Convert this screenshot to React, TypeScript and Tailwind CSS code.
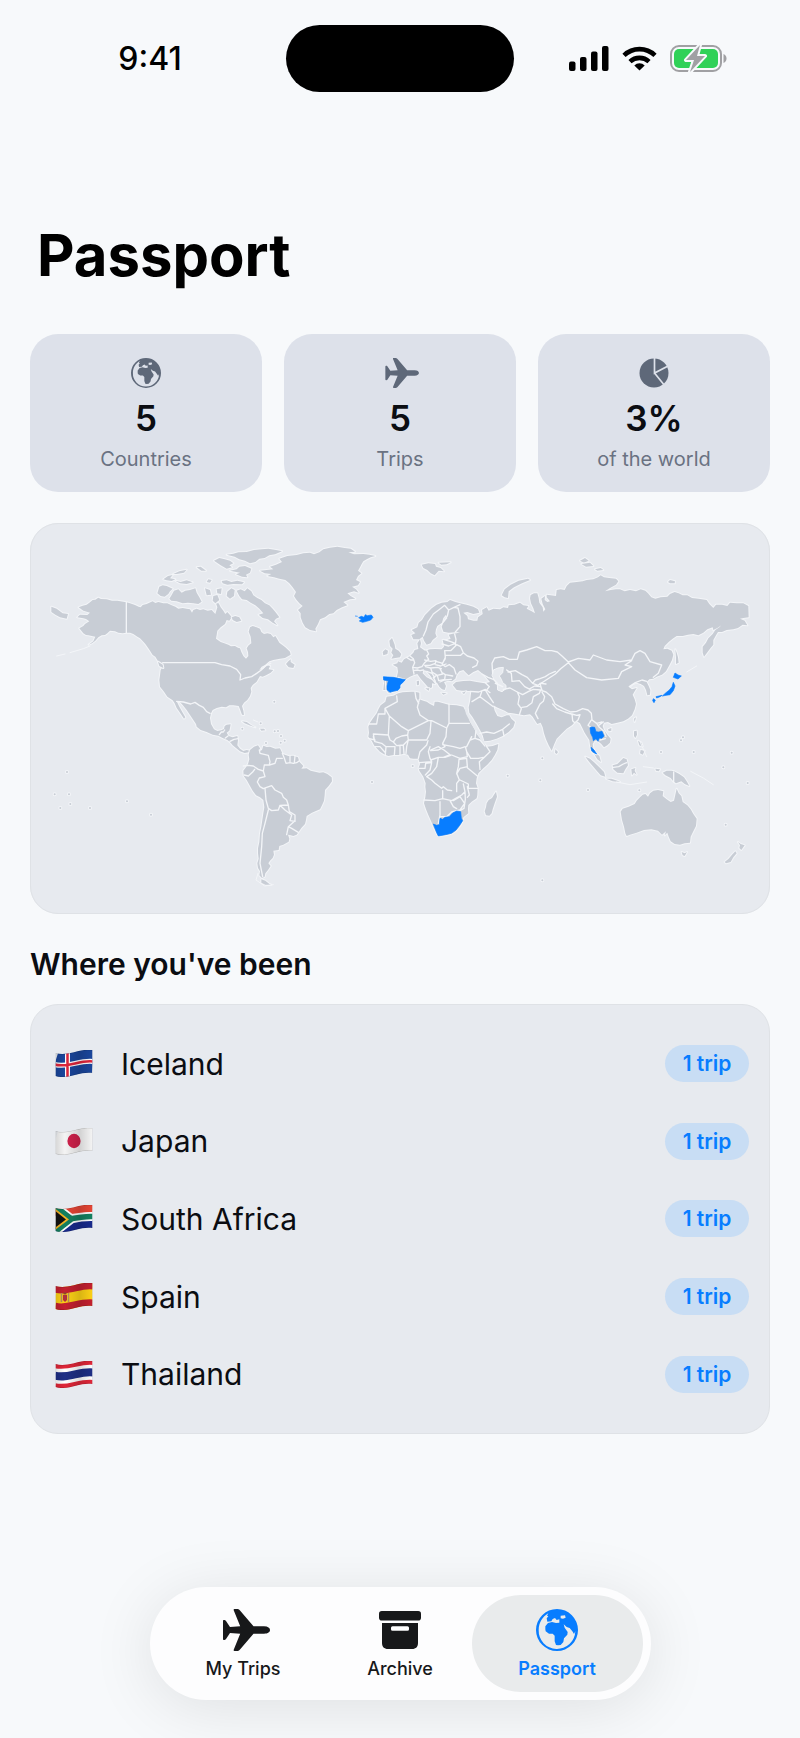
import React, { useState } from 'react';
import clsx from 'clsx';

type IconProps = { className?: string };

const GlobeIcon: React.FC<IconProps> = ({ className }) => (
  <svg viewBox="0 0 126 126" className={className} fill="currentColor" fillRule="evenodd" aria-hidden="true">
    <path d="M63 0a63 63 0 1 1 0 126A63 63 0 0 1 63 0ZM37 13C19 23 8 42 8 63a55 55 0 0 0 110 4l-4 8-5-8-8-10-9-3-9-8 3 10 9 13-1 8-10 11-2 11-8 9-8 1-6-1-4-11V80l-6-6H39l-10-7-1-6v-9l8-10 12-3 12 3 10-1V31l-8 2-5-6-7 3-4 7-12 1-2-10 5-6-4-2ZM74 20l13-1 2 7-8 3-7-1Z" />
  </svg>
);

const PlaneIcon: React.FC<IconProps> = ({ className }) => (
  <svg viewBox="-6 0 53 42" className={className} fill="currentColor" aria-hidden="true">
    <path d="M41 17.300c4 0 6 1.800 6 3.700s-2 3.700-6 3.700H30.500L17 40.500c-1 1.200-2 1.500-3 1.500h-2.500c-.8 0-1-.5-.8-1.300l6.500-16L7 24l-4 6c-.6.900-1.200 1-2 1-.6 0-1-.4-1-1V12c0-.6.4-1 1-1 .8 0 1.400.1 2 1l4 6 10.200-.7-6.500-16C10.500.5 10.700 0 11.500 0H14c1 0 2 .3 3 1.500l13.500 15.800Z" />
  </svg>
);

const PieIcon: React.FC<IconProps> = ({ className }) => (
  <svg viewBox="0 0 30 30" className={className} aria-hidden="true">
    <circle cx="15" cy="15" r="14.500" fill="currentColor" />
    <path d="M15.500 0v15L30 7.500M15.500 15 26 28" fill="none" stroke="#dde1ea" strokeWidth="1.700" />
  </svg>
);

const ArchiveIcon: React.FC<IconProps> = ({ className }) => (
  <svg viewBox="0 0 42 38" className={className} fill="currentColor" fillRule="evenodd" aria-hidden="true">
    <rect width="42" height="9.500" rx="2.800" />
    <path d="M3 12h36v20c0 3.700-2 6-6 6H9c-4 0-6-2.300-6-6ZM13.500 15.300a1.500 1.500 0 0 0-1.500 1.500v1.400a1.500 1.500 0 0 0 1.500 1.500h15a1.500 1.500 0 0 0 1.500-1.500v-1.400a1.500 1.500 0 0 0-1.500-1.500Z" />
  </svg>
);

const StatusIcons: React.FC = () => (
  <div className="flex items-center gap-[13px]">
    <svg viewBox="0 0 40 25" className="h-[25px] w-10" aria-label="Signal">
      <rect y="15.500" width="6.500" height="9.500" rx="2" />
      <rect x="11" y="11" width="6.500" height="14" rx="2" />
      <rect x="22" y="5.500" width="6.500" height="19.500" rx="2" />
      <rect x="33" width="6.500" height="25" rx="2" />
    </svg>
    <svg viewBox="0 0 35 25" className="h-[25px] w-[35px]" fill="none" stroke="#000" strokeWidth="4.600" aria-label="Wi-Fi">
      <path d="M2 9.300a22.500 22.500 0 0 1 31 0M8 15.600a14 14 0 0 1 19 0" />
      <path d="M17.500 24.500 12.300 19.400a7.600 7.600 0 0 1 10.400 0Z" fill="#000" stroke="none" />
    </svg>
    <svg viewBox="0 0 57 27" className="h-[27px] w-[57px]" aria-label="Battery charging">
      <rect x="1" y="1" width="50" height="25" rx="8" fill="none" stroke="#a0a0a3" strokeWidth="2" />
      <path d="M53.500 9c1.800.6 3 2.400 3 4.500s-1.200 3.900-3 4.500Z" fill="#a0a0a3" />
      <rect x="4" y="4" width="44" height="19" rx="5" fill="#30d158" />
      <path d="M30 0 16 15h8l-4 12 15-16h-8l3-11Z" fill="#a0a0a3" stroke="#f7f9fb" strokeWidth="4" strokeLinejoin="round" paintOrder="stroke" />
    </svg>
  </div>
);

// Land masses, all in one 2220x1173 map space
const LAND = [
  // North America
  'M146 262 158 257 170 254 180 247 188 240 196 239 205 233 213 237 230 238 246 242 262 242 289 247 300 250 315 255 326 260 332 262 338 255 350 252 358 248 368 244 376 249 385 246 400 250 412 250 425 256 436 260 445 266 458 264 470 266 480 268 486 278 490 270 500 266 510 270 520 268 533 272 545 270 556 282 562 262 558 250 566 250 572 262 580 272 586 282 592 276 600 285 605 292 598 302 590 300 585 312 572 322 562 332 560 345 558 356 572 366 583 370 595 374 603 379 615 378 624 383 630 385 634 396 640 408 648 416 655 408 654 396 650 385 656 376 664 370 662 350 656 335 660 322 668 318 680 322 690 326 694 336 702 342 712 340 722 342 730 352 736 348 742 358 748 368 756 374 766 382 780 395 782 404 765 414 750 416 730 420 718 424 705 435 695 440 688 450 700 446 712 436 720 438 716 448 730 450 722 458 708 466 698 470 690 468 680 485 668 495 662 504 664 515 660 528 652 540 642 548 636 558 640 572 642 585 636 584 630 568 626 558 610 556 598 556 588 562 575 560 560 564 548 570 543 580 540 594 543 612 552 628 562 633 574 631 582 627 584 618 590 614 602 613 600 624 598 632 590 638 596 648 608 652 622 648 624 660 622 676 630 686 640 693 650 690 660 692 656 697 644 699 630 694 618 684 608 676 602 668 592 660 578 654 565 647 548 644 530 636 512 630 500 620 498 612 490 600 480 585 470 570 458 555 449 545 440 544 448 560 458 578 466 592 462 596 450 578 440 564 434 550 428 541 412 530 402 515 390 500 388 480 390 466 392 450 398 440 385 425 376 410 368 405 360 392 355 385 346 372 340 365 330 355 322 350 310 342 300 338 289 338 278 340 265 338 255 334 240 332 232 340 225 345 215 346 205 352 196 362 186 370 176 374 190 364 196 350 175 346 168 345 160 340 148 325 160 318 165 312 178 304 168 297 160 295 142 292 150 284 172 285 180 278 160 272Z',
  'M64 260 80 266 98 280 114 282 110 296 90 292 76 284 64 276Z',
  // Newfoundland, Vancouver
  'M768 432 775 424 782 418 782 426 794 434 790 444 776 442Z',
  'M384 425 398 434 400 444 388 438Z',
  // Arctic islands
  'M388 200 398 196 410 198 428 206 420 214 415 222 404 230 392 228 382 220Z',
  'M425 225 432 212 445 208 455 218 466 212 480 210 496 205 500 218 508 232 515 245 505 252 490 250 474 248 458 250 440 244 424 242 418 236Z',
  'M525 205 540 210 543 224 530 226Z',
  'M550 228 562 225 568 240 556 250 548 242Z',
  'M560 208 575 205 573 222 562 220Z',
  'M592 215 604 205 614 210 612 228 600 236 590 228Z',
  'M400 178 414 168 428 165 420 175 436 178 425 183 410 181Z',
  'M436 182 452 186 470 181 488 187 470 192 450 190Z',
  'M430 162 448 154 470 149 462 158 440 162Z',
  'M500 142 512 140 528 152 514 152Z',
  'M535 178 545 180 540 188 530 186Z',
  'M575 183 590 181 604 186 622 182 642 187 636 193 610 192 592 194 578 190Z',
  'M552 122 568 114 584 118 600 122 610 130 598 136 606 142 590 146 572 136Z',
  'M590 104 610 101 625 97 650 96 672 90 695 88 715 86 738 90 756 94 735 103 718 106 704 114 688 116 676 126 660 130 645 122 628 118 614 110Z',
  'M600 152 620 148 628 140 645 138 664 146 660 158 648 164 652 172 636 170 618 163 630 158Z',
  'M620 212 632 208 644 214 652 205 664 214 670 226 682 234 694 240 705 250 718 256 728 266 738 278 748 292 738 296 732 304 742 316 728 308 714 298 698 294 686 284 700 280 688 266 676 256 662 248 650 240 636 238 628 228Z',
  'M605 292 616 288 628 292 634 302 620 306 608 300Z',
  // Greenland
  'M690 152 710 150 730 148 720 140 738 134 756 126 748 116 772 108 800 105 820 100 840 98 852 103 868 97 880 88 900 83 922 80 944 84 962 86 975 95 955 97 972 103 1000 102 1018 104 1036 108 1022 112 1010 118 1000 124 995 132 990 142 984 152 994 160 984 168 978 180 990 186 984 196 966 200 978 208 986 218 972 214 952 220 962 228 976 236 960 238 940 246 952 256 936 262 920 270 910 280 898 282 885 292 870 298 864 312 856 326 858 334 840 330 826 322 818 308 812 292 812 280 804 270 818 258 808 250 798 238 792 228 798 216 788 202 778 190 766 180 748 176 732 172 712 168 724 162 704 160Z',
  // Svalbard, Franz Josef, Novaya Zemlya
  'M1175 134 1195 130 1215 132 1218 140 1232 144 1242 154 1226 152 1214 166 1202 160 1192 150 1180 144Z',
  'M1226 128 1262 127 1250 133 1234 134Z',
  'M1415 226 1424 208 1442 194 1466 182 1494 176 1500 180 1476 190 1452 202 1436 214 1434 234 1424 232Z',
  'M1650 122 1665 114 1676 122 1662 128Z',
  'M1654 132 1680 128 1690 138 1668 140Z',
  'M1695 148 1712 144 1720 150 1702 152Z',
  'M1914 186 1920 180 1935 184 1934 190 1920 190Z',
  // Cuba, Hispaniola
  'M636 604 650 606 664 616 676 622 658 616 644 610Z',
  'M690 626 702 626 706 631 694 632Z',
  // South America
  'M660 690 672 680 684 676 690 685 688 694 696 690 700 677 710 681 720 680 736 686 750 685 758 702 775 708 790 707 804 712 808 725 820 738 814 746 830 745 842 752 855 755 868 758 880 757 892 762 905 772 906 784 896 798 885 810 884 826 882 842 876 856 870 868 856 874 846 878 830 888 828 900 825 912 814 924 806 936 800 944 790 948 782 946 774 944 778 956 776 965 760 974 748 978 746 990 730 992 732 1004 728 1014 720 1022 715 1030 722 1038 714 1050 706 1060 704 1070 696 1074 688 1066 690 1054 684 1044 682 1030 686 1016 684 1000 684 985 688 966 690 940 694 920 697 900 700 880 703 862 700 840 690 832 678 826 668 812 660 798 650 780 641 768 640 752 648 742 654 732 658 718 656 704Z',
  'M694 1078 706 1082 718 1092 724 1094 706 1094 694 1088Z',
  // Africa
  'M1070 530 1090 527 1105 520 1118 517 1130 516 1145 515 1155 515 1168 518 1168 530 1168 538 1180 542 1190 545 1200 552 1212 558 1214 545 1224 545 1240 550 1256 554 1280 556 1300 560 1310 580 1316 592 1320 605 1328 618 1335 630 1340 642 1350 655 1362 670 1370 680 1388 678 1405 672 1402 690 1394 706 1385 720 1372 734 1360 745 1345 760 1340 775 1338 790 1343 804 1342 825 1340 835 1325 845 1315 855 1314 868 1315 880 1300 892 1297 905 1290 918 1278 932 1268 940 1250 945 1225 948 1220 940 1210 920 1204 905 1195 885 1188 868 1182 850 1186 832 1188 815 1186 800 1187 790 1180 770 1168 752 1166 744 1170 732 1165 716 1150 716 1140 715 1134 704 1122 701 1105 705 1090 705 1075 708 1062 703 1050 695 1040 685 1033 677 1025 662 1015 650 1017 638 1015 620 1020 608 1028 596 1040 580 1046 566 1052 556 1066 545Z',
  'M1398 815 1401 830 1394 850 1388 868 1385 880 1378 887 1368 886 1364 874 1368 862 1370 850 1376 840 1386 834 1392 824Z',
  // Eurasia
  'M1060 510 1062 490 1060 470 1100 473 1104 455 1102 442 1088 434 1102 430 1104 424 1115 428 1122 418 1140 408 1150 398 1154 390 1165 387 1162 370 1170 358 1173 370 1170 382 1185 392 1200 388 1215 387 1235 388 1242 380 1240 368 1238 360 1252 360 1262 356 1256 344 1268 341 1280 340 1290 336 1275 337 1256 338 1240 335 1235 320 1240 308 1252 295 1248 284 1240 294 1236 308 1222 318 1218 328 1216 340 1220 350 1208 360 1202 370 1190 374 1182 362 1178 350 1168 358 1150 358 1144 345 1156 340 1145 330 1162 322 1166 308 1176 300 1185 285 1194 276 1205 265 1220 254 1235 248 1252 246 1260 240 1276 246 1290 250 1310 254 1330 260 1344 268 1348 278 1330 282 1312 276 1300 278 1312 288 1314 298 1330 302 1342 302 1344 292 1358 282 1356 270 1370 262 1376 272 1390 266 1410 268 1420 262 1434 264 1436 256 1454 254 1470 248 1480 256 1495 258 1490 266 1505 274 1515 280 1510 265 1503 250 1500 235 1502 225 1512 220 1522 220 1526 234 1528 248 1538 262 1540 275 1546 268 1538 252 1534 236 1545 228 1544 240 1552 246 1560 244 1550 232 1550 224 1562 226 1578 228 1580 210 1592 208 1604 210 1610 198 1620 188 1640 186 1658 184 1670 180 1690 178 1704 172 1712 166 1722 172 1738 174 1758 176 1765 184 1758 194 1740 204 1725 214 1742 210 1758 208 1770 208 1784 214 1800 210 1818 214 1832 208 1846 212 1854 220 1864 232 1876 236 1892 232 1912 230 1920 222 1934 216 1946 220 1958 226 1972 226 1986 234 2006 236 2030 240 2038 252 2050 264 2058 254 2076 254 2092 258 2100 248 2120 250 2140 250 2155 258 2156 292 2140 294 2130 296 2144 302 2152 316 2138 314 2124 324 2110 328 2090 330 2076 336 2064 336 2058 346 2050 360 2050 374 2040 386 2030 400 2022 410 2018 398 2018 380 2028 368 2035 355 2048 342 2056 330 2068 322 2074 316 2062 324 2050 330 2048 322 2032 328 2020 338 2005 346 1990 342 1974 344 1958 348 1940 348 1928 356 1916 366 1904 378 1900 388 1912 386 1925 392 1930 404 1926 420 1918 436 1908 454 1896 464 1880 470 1870 476 1858 478 1850 486 1856 498 1861 510 1860 524 1852 526 1848 510 1842 498 1832 492 1820 488 1808 492 1798 502 1806 508 1820 504 1814 514 1808 524 1814 538 1818 552 1814 568 1806 586 1794 596 1780 604 1762 608 1745 612 1734 606 1722 608 1718 618 1722 630 1732 644 1742 656 1740 668 1732 676 1722 682 1714 672 1702 662 1694 662 1688 672 1690 685 1698 700 1708 708 1713 726 1702 718 1694 704 1684 694 1680 676 1678 660 1670 648 1664 638 1656 622 1650 610 1638 602 1626 616 1610 626 1594 642 1580 656 1572 674 1565 692 1556 676 1548 658 1542 640 1538 622 1532 608 1522 612 1514 600 1508 590 1500 583 1482 586 1465 583 1448 580 1434 578 1424 572 1410 566 1400 562 1390 556 1394 572 1402 588 1415 592 1430 586 1438 586 1444 596 1455 606 1450 622 1436 636 1418 648 1400 656 1380 662 1363 664 1358 646 1350 630 1340 612 1328 592 1318 578 1316 562 1320 545 1322 528 1324 514 1308 512 1296 512 1280 510 1268 495 1278 486 1300 483 1320 482 1340 486 1364 490 1380 486 1368 472 1354 458 1344 450 1330 456 1316 466 1308 458 1300 450 1288 454 1280 464 1276 476 1266 484 1254 482 1242 486 1248 498 1244 510 1236 508 1228 500 1222 490 1210 480 1200 466 1188 452 1180 450 1178 460 1190 472 1206 480 1216 492 1206 490 1206 502 1198 506 1186 492 1172 476 1162 462 1150 466 1140 470 1130 476 1120 484 1112 494 1106 508 1095 515 1085 516 1075 518 1070 510Z',
  // British Isles
  'M1078 362 1086 354 1090 364 1094 374 1096 386 1106 392 1114 402 1110 412 1096 414 1084 416 1090 406 1084 398 1088 386 1080 378Z',
  'M1058 396 1066 388 1074 392 1072 402 1060 406Z',
  // Mediterranean islands
  'M1160 484 1167 482 1167 494 1161 496Z',
  'M1186 505 1198 505 1196 512Z',
  'M1234 518 1250 520 1240 524Z',
  'M1296 518 1308 514 1302 522Z',
  // Sakhalin, Taiwan, Hainan, Sri Lanka
  'M1936 388 1940 398 1944 412 1946 428 1938 432 1938 412Z',
  'M1812 596 1818 592 1814 606Z',
  'M1734 628 1744 624 1744 632 1736 634Z',
  'M1576 688 1584 696 1580 702 1575 698Z',
  // Philippines
  'M1812 634 1820 632 1821 644 1816 654 1812 648Z',
  'M1832 690 1844 692 1838 704 1830 700Z',
  'M1824 662 1834 668 1838 680 1828 676Z',
  // Indonesia, Papua
  'M1666 710 1680 716 1694 728 1708 742 1722 756 1726 770 1712 766 1700 752 1688 738 1676 724Z',
  'M1728 776 1744 776 1762 782 1770 786 1748 784Z',
  'M1748 736 1762 732 1772 722 1780 714 1790 718 1794 736 1786 748 1780 760 1762 758 1750 748Z',
  'M1804 748 1816 744 1814 752 1820 764 1812 758 1806 766Z',
  'M1876 746 1890 748 1886 754 1878 752Z',
  'M1898 758 1910 752 1924 752 1932 754 1948 762 1962 772 1970 784 1978 798 1964 792 1954 784 1938 790 1930 784 1922 774 1906 766Z',
  // Australia, Tasmania, New Zealand
  'M1772 875 1778 866 1796 860 1814 852 1820 842 1830 832 1838 824 1846 822 1854 830 1860 820 1870 812 1884 810 1900 814 1898 828 1910 838 1922 846 1932 842 1936 824 1940 806 1946 820 1954 828 1958 846 1972 856 1982 868 1990 882 2000 896 1998 918 1990 934 1982 950 1980 968 1964 970 1950 974 1934 972 1922 964 1916 950 1912 938 1904 946 1908 934 1896 944 1884 932 1864 928 1842 930 1820 938 1800 944 1790 948 1786 940 1782 920 1776 900Z',
  'M1955 996 1964 1000 1971 996 1964 1008 1958 1006Z',
  'M2124 966 2132 972 2144 976 2134 990 2128 984 2130 976Z',
  'M2116 994 2120 1000 2110 1012 2102 1026 2088 1030 2084 1026 2096 1016 2106 1004Z',
];

const BORDERS = [
  // Americas
  'M289 247V338M398 428H555L575 434 600 438 620 448 632 464 630 480 645 474 665 470 680 460 694 450 706 438 722 430',
  'M440 544 460 546 482 552 495 547 508 556 520 562 530 575 540 580M568 644 574 636 580 636 584 630M586 654 594 648M600 664 612 658 624 656M640 738 655 736 670 738 685 748 700 753M642 765 655 768 668 756 674 748M703 735 700 753 705 770 688 774 682 786 690 800 700 806 710 802M688 690 690 700 715 706 720 725 718 735 703 735M718 735 735 730 740 715 757 715M757 700 763 715 768 730 780 728M780 708V728L790 730 800 728 808 722M795 708 793 728M710 802 725 797 735 810 755 820 760 832 770 840 775 855M705 805 708 840 715 865 725 872 745 870 750 856 775 855M750 856 765 870 785 885 780 902 795 904 795 885 778 875 775 855M795 902 775 920 785 925 805 937M715 870 705 910 697 940 695 980 692 1010 690 1030 698 1070M775 920 770 944',
  // Africa
  'M1100 528 1102 545 1065 565 1065 582 1045 582 1040 612 1016 612M1065 565 1078 588 1075 645 1030 642 1034 664M1078 588 1115 620 1135 632 1195 602 1170 585 1162 562 1168 538M1155 516 1158 535 1166 550M1195 602 1205 602 1250 624 1257 610H1318M1257 552V610M1250 624 1248 650 1238 670 1245 680 1225 690 1202 692M1203 604 1200 640 1190 660 1155 660 1135 660 1133 645 1135 632M1075 645 1080 660 1090 666 1098 655 1115 648 1133 645M1090 666 1100 677 1120 675 1135 660 1130 680 1128 700M1095 680 1093 706M1110 679V704M1120 677 1122 700M1068 680 1066 703M1068 680 1095 680M1030 650 1035 665 1055 670 1068 680M1036 680 1050 680 1064 696M1015 655 1035 660M1165 715 1170 695 1190 675 1194 662M1200 680 1195 695 1200 715 1205 725 1168 728M1202 690 1225 680 1242 690 1262 706 1245 712 1225 712 1202 720M1238 674 1270 680 1290 685 1306 680 1310 695 1312 710 1290 715 1265 705M1310 695 1322 715 1345 715 1360 712M1335 655 1350 660 1365 678M1320 660 1335 655 1338 632M1325 650 1310 680M1370 680 1380 695 1360 715 1348 725 1350 748M1225 712 1220 740 1205 760 1190 770 1205 780 1215 790 1235 805 1240 800 1252 810 1265 812M1287 718 1285 740 1280 760 1288 780 1280 790 1280 815M1290 718 1310 715 1312 740 1290 745 1280 762M1312 743 1342 768M1290 780 1315 792 1315 805 1343 805M1182 840 1215 842 1238 836 1238 812M1238 836 1265 842 1295 825 1305 815 1300 792M1230 845V885L1225 910M1260 842 1270 860 1280 866M1230 890 1250 890 1265 876 1290 870 1304 850 1290 830 1270 842M1305 815 1306 838 1302 865 1290 872M1312 800 1318 825 1312 832M1168 745 1185 745 1187 730 1205 728M1186 765 1200 750 1205 728M1257 705 1240 712',
  // Europe
  'M1104 472 1124 478M1140 408 1150 416 1154 428 1148 442 1152 462M1130 412 1142 420 1150 420M1148 442 1162 444 1176 440 1184 428 1196 418 1190 408 1196 402 1190 390M1150 452 1162 450 1170 452 1180 450M1184 420 1202 424 1218 422 1216 430 1200 436 1184 436M1218 424 1238 430 1246 412 1244 392M1216 434 1232 438 1248 432M1246 416 1236 432 1246 440 1258 434 1272 444 1278 462M1186 440 1202 444 1222 442 1234 446M1202 444 1206 456 1222 466 1238 462 1230 446M1222 466 1226 482 1244 478 1246 464 1236 458M1246 464 1268 468M1230 486 1244 480 1264 478M1190 454 1206 460 1214 472M1220 466 1210 472 1216 484M1244 392 1262 392 1280 374 1292 380 1300 398 1292 406 1270 406 1248 406M1236 372 1256 378 1276 370M1240 358 1260 364 1276 370M1274 342 1278 358 1276 374M1300 398 1312 408 1332 414 1344 424 1340 436 1328 442M1240 306 1252 288 1256 270 1272 262 1284 264 1290 290 1290 320 1276 336M1256 270 1244 256 1226 270 1210 282 1194 306 1188 330 1180 348M1272 262 1290 254M1066 484 1068 508',
  // Middle East, Central Asia
  'M1356 462 1374 472 1390 478 1402 490M1366 488 1378 500 1370 510 1380 518M1320 514 1346 516 1366 508M1380 518 1370 510 1356 512 1350 530 1326 545M1350 530 1370 545 1390 560M1366 510 1378 530 1390 548M1350 640 1370 636 1392 640 1418 628 1438 612M1418 628 1422 648M1420 508 1440 504 1462 516 1468 530 1464 552 1474 566 1468 584M1418 500 1410 496 1396 490M1462 516 1478 524 1496 514 1510 508 1532 510 1528 520 1510 530 1506 548 1490 560 1476 562M1536 516 1544 530 1540 544 1530 552 1522 568 1516 580 1524 596M1430 450 1444 460 1446 484 1468 482 1484 500 1500 508M1434 456 1456 452 1476 464 1492 472 1508 490 1516 480 1530 476 1546 470 1558 462 1576 454M1508 490 1524 496 1532 490 1548 492M1500 506 1514 498 1532 500 1536 510M1388 460 1386 430 1394 414 1420 410 1438 418 1462 418 1468 396 1490 390 1520 380 1545 392 1565 392 1582 396 1596 408 1615 426M1615 428 1592 446 1576 462 1530 492M1615 426 1645 415 1680 420 1690 405 1730 420 1770 425 1805 420 1815 400 1830 392 1845 400 1860 425 1895 435 1885 460 1870 472M1615 428 1635 450 1670 473 1715 480 1765 475 1775 455 1805 440 1785 435 1805 422M1798 500 1816 488 1836 480 1850 484M1530 490 1536 512 1548 516 1565 530 1575 552 1600 566 1622 576 1640 574 1658 566 1674 570 1684 580 1686 600 1700 610 1716 606M1568 552 1580 566 1604 576 1624 582M1626 582 1640 586 1650 584 1644 600 1640 604M1626 582 1628 602 1634 608M1684 600 1674 616 1682 622M1700 610 1708 622 1722 634 1728 650M1720 606 1706 616M1710 660 1726 656',
  'M1931 756V786M1750 742 1766 740 1780 732 1790 728M1690 700 1700 704',
];

const VISITED = [
  'M975 288 983 289M986 293 994 289 1002 292 1006 284 1012 287 1024 285 1029 292 1022 300 1010 304 998 307 988 303 994 298Z',
  'M1060 470 1074 471 1090 472 1104 475 1126 479 1118 488 1110 495 1110 503 1104 511 1092 513 1080 517 1071 509 1071 498 1075 482 1061 480Z',
  'M1210 912 1220 916 1228 914 1230 895 1238 898 1245 892 1258 890 1268 879 1280 873 1292 875 1294 895 1298 902 1290 914 1278 930 1264 940 1246 944 1225 948 1220 938Z',
  'M1935 459 1944 465 1954 468 1944 477 1930 472Z',
  'M1930 487 1935 498 1930 512 1920 524 1908 526 1897 528 1908 518 1918 510 1926 500Z',
  'M1870 536 1876 540 1872 548 1868 542ZM1878 530 1896 526 1890 530 1880 534Z',
  'M1680 623 1686 621 1694 622 1698 635 1706 636 1716 634 1722 648 1716 655 1708 654 1704 664 1698 656 1690 662 1688 652 1682 640ZM1683 682 1692 690 1700 702 1692 698 1685 692Z',
];

const ISLETS = [
  [111, 756], [74, 823], [117, 823], [121, 852], [91, 864], [180, 864], [291, 844], [363, 884],
  [733, 545], [637, 626], [692, 610], [734, 634], [744, 633], [753, 648], [764, 662], [752, 668], [708, 669],
  [1026, 786], [1148, 738], [1433, 767], [1531, 781], [1537, 715], [1674, 810], [1828, 811], [1537, 1081],
  [1893, 696], [1953, 661], [1959, 652], [1991, 696], [2105, 698], [2080, 742], [2153, 789], [2087, 914],
];

const WorldMap: React.FC = () => (
  <svg viewBox="0 9 2220 1173" className="block w-full" role="img" aria-label="World map of visited countries">
    <g fill="#c8cdd5" stroke="#f3f5f8" strokeWidth="6" strokeLinejoin="round" paintOrder="stroke">
      {LAND.map((d) => (
        <path key={d} d={d} />
      ))}
      {ISLETS.map(([x, y]) => (
        <circle key={`${x}-${y}`} cx={x} cy={y} r="3" />
      ))}
    </g>
    {/* Inland water */}
    <path d="M1390 450 1404 444 1420 442 1418 458 1408 468 1414 478 1418 488 1428 496 1428 506 1416 515 1403 510 1402 494 1392 478 1386 466Z" fill="#e7eaef" stroke="#f3f5f8" strokeWidth="3" />
    <path d="M1303 560 1314 578 1330 606 1344 632 1360 660 1366 672 1354 662 1338 636 1322 608 1308 582Z" fill="#e7eaef" />
    <g fill="none" stroke="#f3f5f8" strokeWidth="4" strokeLinejoin="round" strokeLinecap="round">
      {BORDERS.map((d) => (
        <path key={d} d={d} />
      ))}
      {/* Island chains */}
      <path d="M80 408 105 402M120 398 160 386 180 378M1760 786 1800 794 1850 786M1982 754 2020 774 2050 794M684 1060 678 1080 704 1098 730 1094M670 600 684 606M1830 665 1850 710M1840 740 1870 744M1970 456 2000 438" strokeWidth="3" />
    </g>
    <g fill="#087dff" stroke="#087dff" strokeWidth="2" strokeLinejoin="round">
      {VISITED.map((d) => (
        <path key={d} d={d} />
      ))}
    </g>
  </svg>
);

type Stripe = { y: number; w: number; color: string };

const FLAG_SHAPE = 'M0 3C12 7 24-2 37 0V23C24 21 12 30 0 26Z';

// Every stripe follows the same wave as the flag's edge
const wave = (y: number) => `M-1 ${y + 3}C12 ${y + 7} 24 ${y - 2} 38 ${y}`;

const Flag: React.FC<{ code: string; stripes: Stripe[]; children?: React.ReactNode }> = ({ code, stripes, children }) => (
  <svg viewBox="0 0 37 27" className="h-[27px] w-[38px] shrink-0" aria-hidden="true">
    <defs>
      <clipPath id={`flag-${code}`}>
        <path d={FLAG_SHAPE} />
      </clipPath>
      <linearGradient id={`shade-${code}`}>
        <stop offset="0" stopColor="#000" stopOpacity=".12" />
        <stop offset=".25" stopColor="#000" stopOpacity="0" />
        <stop offset=".65" stopColor="#000" stopOpacity=".14" />
        <stop offset="1" stopColor="#000" stopOpacity="0" />
      </linearGradient>
    </defs>
    <g clipPath={`url(#flag-${code})`}>
      {stripes.map((s, i) => (
        <path key={i} d={wave(s.y)} stroke={s.color} strokeWidth={s.w} fill="none" />
      ))}
      {children}
      <path d={FLAG_SHAPE} fill={`url(#shade-${code})`} stroke="#0003" />
    </g>
  </svg>
);

const FLAGS: Record<string, React.ReactNode> = {
  is: (
    <Flag code="is" stripes={[{ y: 11.5, w: 32, color: '#1a469c' }]}>
      <path d="M12 0V27" stroke="#fff" strokeWidth="5" />
      <path d={wave(11.5)} stroke="#fff" strokeWidth="5" fill="none" />
      <path d={`M12 0V27${wave(11.5)}`} stroke="#e0263c" strokeWidth="2.500" fill="none" />
    </Flag>
  ),
  jp: (
    <Flag code="jp" stripes={[{ y: 11.5, w: 32, color: '#f4f4f4' }]}>
      <ellipse cx="18.500" cy="13" rx="6.600" ry="7.200" fill="#d0214b" />
    </Flag>
  ),
  za: (
    <Flag
      code="za"
      stripes={[
        { y: 11.5, w: 34, color: '#fff' },
        { y: 1, w: 13, color: '#e64535' },
        { y: 22, w: 13, color: '#182a8c' },
      ]}
    >
      <path d="M-2 0 16 14-2 28M14 14C24 12 30 11 38 11.500" stroke="#fff" strokeWidth="9" fill="none" />
      <path d="M-2 0 16 14-2 28M14 14C24 12 30 11 38 11.500" stroke="#148060" strokeWidth="5.500" fill="none" />
      <path d="M-2 3.500 12 14.500-2 25Z" fill="#111" stroke="#f4b223" strokeWidth="1.800" />
    </Flag>
  ),
  es: (
    <Flag
      code="es"
      stripes={[
        { y: 11.5, w: 32, color: '#fcd116' },
        { y: 1, w: 11, color: '#c4202f' },
        { y: 22, w: 11, color: '#c4202f' },
      ]}
    >
      <path d="M6 10V19M13 10V19" stroke="#b98a62" strokeWidth="1.500" />
      <path d="M7.500 12H11.500V17L9.500 19 7.500 17Z" fill="#b3303a" />
      <path d="M8 10.500H11" stroke="#8a4a28" strokeWidth="2" />
    </Flag>
  ),
  th: (
    <Flag
      code="th"
      stripes={[
        { y: 11.5, w: 32, color: '#fff' },
        { y: 0.5, w: 7, color: '#e02638' },
        { y: 22.5, w: 7, color: '#e02638' },
        { y: 11.5, w: 8, color: '#1f2f86' },
      ]}
    />
  ),
};

const STATS = [
  { icon: <GlobeIcon className="h-[30px] w-[30px]" />, value: '5', label: 'Countries' },
  { icon: <PlaneIcon className="h-[30px] w-[38px]" />, value: '5', label: 'Trips' },
  { icon: <PieIcon className="h-[30px] w-[30px]" />, value: '3%', label: 'of the world' },
];

const COUNTRIES = [
  { code: 'is', name: 'Iceland', trips: '1 trip' },
  { code: 'jp', name: 'Japan', trips: '1 trip' },
  { code: 'za', name: 'South Africa', trips: '1 trip' },
  { code: 'es', name: 'Spain', trips: '1 trip' },
  { code: 'th', name: 'Thailand', trips: '1 trip' },
];

const TABS = [
  { id: 'trips', label: 'My Trips', icon: <PlaneIcon className="h-[42px] w-[53px]" /> },
  { id: 'archive', label: 'Archive', icon: <ArchiveIcon className="h-[38px] w-[42px]" /> },
  { id: 'passport', label: 'Passport', icon: <GlobeIcon className="h-[42px] w-[42px]" /> },
];

const App: React.FC = () => {
  const [activeTab, setActiveTab] = useState('passport');

  return (
    <div className="flex min-h-screen flex-col bg-[#f7f9fb] px-[30px] font-['Inter','Liberation_Sans',sans-serif] text-[#0b0d12]">
      {/* Status bar */}
      <header className="grid grid-cols-[1fr_228px_1fr] items-center pt-[25px] text-black">
        <span className="pr-4 text-center text-[32px] font-medium leading-[34px]">9:41</span>
        <div className="h-[67px] rounded-full bg-black" />
        <div className="flex justify-center pl-3">
          <StatusIcons />
        </div>
      </header>

      <h1 className="mt-[128px] px-[7px] text-[58px] font-bold leading-[70px] text-black">Passport</h1>

      {/* Stats */}
      <section className="mt-[44px] grid grid-cols-3 gap-[22px]">
        {STATS.map((stat) => (
          <div key={stat.label} className="flex flex-col items-center rounded-[28px] bg-[#dde1ea] pb-5 pt-[24px]">
            <div className="text-[#5e6879]">{stat.icon}</div>
            <p className="mt-2 text-[35px] font-semibold leading-[44px]">{stat.value}</p>
            <p className="mt-[6px] text-[20px] leading-[26px] text-[#6a7282]">{stat.label}</p>
          </div>
        ))}
      </section>

      <section className="mt-[31px] overflow-hidden rounded-[28px] bg-[#e7eaef] outline outline-[1px] -outline-offset-1 outline-[#dfe2e6]">
        <WorldMap />
      </section>

      <h2 className="mt-[30px] text-[30px] font-semibold leading-10">Where you've been</h2>

      <ul className="mt-5 flex h-[430px] flex-col rounded-[28px] border border-[#dfe2e6] bg-[#e7eaef] px-5 py-5">
        {COUNTRIES.map((country) => (
          <li key={country.code} className="flex flex-1 items-center pl-1">
            {FLAGS[country.code]}
            <span className="ml-7 text-[30px] leading-9">{country.name}</span>
            <span className="ml-auto min-w-[84px] rounded-full bg-[#c8ddf4] px-[15px] py-[5px] text-center text-[21px] font-semibold leading-[27px] text-[#087dff]">
              {country.trips}
            </span>
          </li>
        ))}
      </ul>

      {/* Tab bar */}
      <nav className="mx-auto mb-[38px] mt-auto flex -space-x-[14px] rounded-full bg-[#fdfdfe] p-2 shadow-[0_8px_64px_rgba(0,0,0,0.1)]">
        {TABS.map((tab) => (
          <button
            key={tab.id}
            type="button"
            onClick={() => setActiveTab(tab.id)}
            className={clsx(
              'flex h-[97px] w-[171px] flex-col items-center rounded-full pt-[14px] text-[18px]',
              activeTab === tab.id ? 'bg-[#e9ebec] font-semibold text-[#087dff]' : 'font-medium text-[#17181a]'
            )}
          >
            <span className="flex h-[42px] items-center">{tab.icon}</span>
            <span className="mt-[6px] leading-6">{tab.label}</span>
          </button>
        ))}
      </nav>
    </div>
  );
};

export default App;
